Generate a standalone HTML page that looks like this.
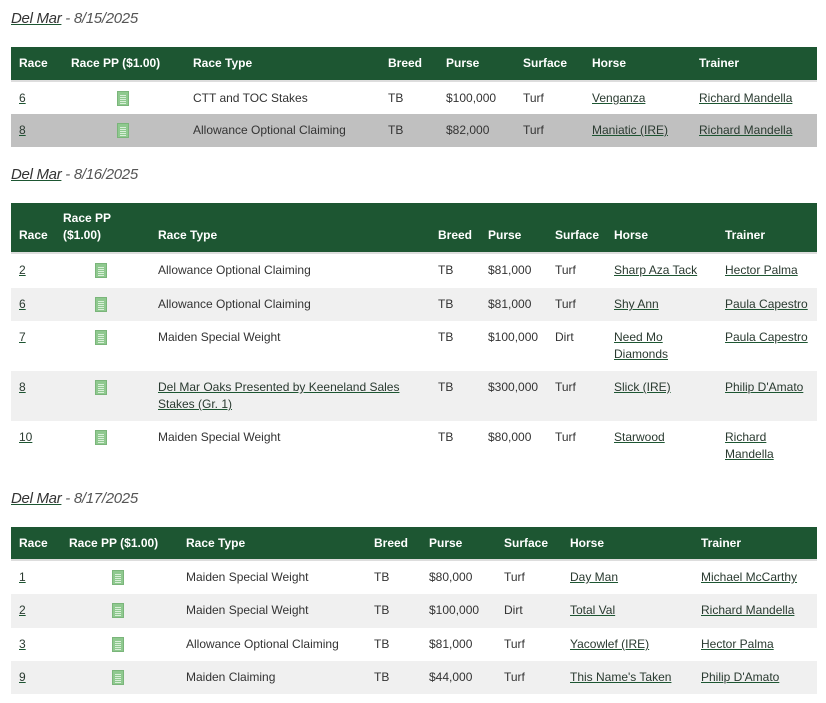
<!DOCTYPE html>
<html><head><meta charset="utf-8"><style>
body{margin:0;background:#fff;font-family:"Liberation Sans",Arial,sans-serif;font-size:12px;color:#333;width:826px;height:703px;overflow:hidden;position:relative}
h3{position:absolute;left:11px;margin:0;font-weight:normal;font-style:italic;font-size:15px;color:#555;letter-spacing:-0.3px}
h3 a{color:#333;text-decoration:underline;text-decoration-color:#1d5632}
table{position:absolute;left:11px;width:806px;border-collapse:collapse;table-layout:fixed}
th{background:#1d5632;color:#fff;font-weight:bold;text-align:left;padding:0 0 0 8px;border-bottom:2px solid #ddd;vertical-align:middle;line-height:17px}
td{padding:0 0 0 8px;vertical-align:top;line-height:17px;padding-top:8px}
td a{color:#2a3a30;text-decoration:underline;text-decoration-color:#1d5632}
tr.s td{background:#f0f0f0}
tr.h td{background:#c0c0c0}
.ic{display:inline-block;width:12px;height:15px;background:#8fc98f;border:1px solid #7ab57a;box-sizing:border-box;position:relative;margin-top:1px;vertical-align:top}
.ic::after{content:"";position:absolute;left:2px;right:2px;top:3px;height:9px;background:repeating-linear-gradient(#d9efd9 0 1px,transparent 1px 2px)}
</style></head><body>

<h3 style="top:10px"><a>Del Mar</a> - 8/15/2025</h3>
<table style="top:47px">
<colgroup><col style="width:52px"><col style="width:122px"><col style="width:195px"><col style="width:58px"><col style="width:77px"><col style="width:69px"><col style="width:107px"><col></colgroup>
<tr style="height:34px"><th>Race</th><th>Race PP ($1.00)</th><th>Race Type</th><th>Breed</th><th>Purse</th><th>Surface</th><th>Horse</th><th>Trainer</th></tr>
<tr style="height:33px"><td><a>6</a></td><td style="padding-left:54px"><span class="ic"></span></td><td>CTT and TOC Stakes</td><td>TB</td><td>$100,000</td><td>Turf</td><td><a>Venganza</a></td><td><a>Richard Mandella</a></td></tr>
<tr class="h" style="height:33px"><td><a>8</a></td><td style="padding-left:54px"><span class="ic"></span></td><td>Allowance Optional Claiming</td><td>TB</td><td>$82,000</td><td>Turf</td><td><a>Maniatic (IRE)</a></td><td><a>Richard Mandella</a></td></tr>
</table>

<h3 style="top:166px"><a>Del Mar</a> - 8/16/2025</h3>
<table style="top:203px">
<colgroup><col style="width:44px"><col style="width:95px"><col style="width:280px"><col style="width:50px"><col style="width:67px"><col style="width:59px"><col style="width:111px"><col></colgroup>
<tr style="height:50px"><th style="vertical-align:bottom;padding-bottom:8px">Race</th><th style="vertical-align:bottom;padding-bottom:8px">Race PP<br>($1.00)</th><th style="vertical-align:bottom;padding-bottom:8px">Race Type</th><th style="vertical-align:bottom;padding-bottom:8px">Breed</th><th style="vertical-align:bottom;padding-bottom:8px">Purse</th><th style="vertical-align:bottom;padding-bottom:8px">Surface</th><th style="vertical-align:bottom;padding-bottom:8px">Horse</th><th style="vertical-align:bottom;padding-bottom:8px">Trainer</th></tr>
<tr style="height:35px"><td><a>2</a></td><td style="padding-left:40px"><span class="ic"></span></td><td>Allowance Optional Claiming</td><td>TB</td><td>$81,000</td><td>Turf</td><td><a>Sharp Aza Tack</a></td><td><a>Hector Palma</a></td></tr>
<tr class="s" style="height:33px"><td><a>6</a></td><td style="padding-left:40px"><span class="ic"></span></td><td>Allowance Optional Claiming</td><td>TB</td><td>$81,000</td><td>Turf</td><td><a>Shy Ann</a></td><td><a>Paula Capestro</a></td></tr>
<tr style="height:50px"><td><a>7</a></td><td style="padding-left:40px"><span class="ic"></span></td><td>Maiden Special Weight</td><td>TB</td><td>$100,000</td><td>Dirt</td><td><a>Need Mo<br>Diamonds</a></td><td><a>Paula Capestro</a></td></tr>
<tr class="s" style="height:50px"><td><a>8</a></td><td style="padding-left:40px"><span class="ic"></span></td><td><a>Del Mar Oaks Presented by Keeneland Sales<br>Stakes (Gr. 1)</a></td><td>TB</td><td>$300,000</td><td>Turf</td><td><a>Slick (IRE)</a></td><td><a>Philip D'Amato</a></td></tr>
<tr style="height:50px"><td><a>10</a></td><td style="padding-left:40px"><span class="ic"></span></td><td>Maiden Special Weight</td><td>TB</td><td>$80,000</td><td>Turf</td><td><a>Starwood</a></td><td><a>Richard<br>Mandella</a></td></tr>
</table>

<h3 style="top:490px"><a>Del Mar</a> - 8/17/2025</h3>
<table style="top:527px">
<colgroup><col style="width:50px"><col style="width:117px"><col style="width:188px"><col style="width:55px"><col style="width:75px"><col style="width:66px"><col style="width:131px"><col></colgroup>
<tr style="height:33px"><th>Race</th><th>Race PP ($1.00)</th><th>Race Type</th><th>Breed</th><th>Purse</th><th>Surface</th><th>Horse</th><th>Trainer</th></tr>
<tr style="height:34px"><td><a>1</a></td><td style="padding-left:51px"><span class="ic"></span></td><td>Maiden Special Weight</td><td>TB</td><td>$80,000</td><td>Turf</td><td><a>Day Man</a></td><td><a>Michael McCarthy</a></td></tr>
<tr class="s" style="height:34px"><td><a>2</a></td><td style="padding-left:51px"><span class="ic"></span></td><td>Maiden Special Weight</td><td>TB</td><td>$100,000</td><td>Dirt</td><td><a>Total Val</a></td><td><a>Richard Mandella</a></td></tr>
<tr style="height:33px"><td><a>3</a></td><td style="padding-left:51px"><span class="ic"></span></td><td>Allowance Optional Claiming</td><td>TB</td><td>$81,000</td><td>Turf</td><td><a>Yacowlef (IRE)</a></td><td><a>Hector Palma</a></td></tr>
<tr class="s" style="height:33px"><td><a>9</a></td><td style="padding-left:51px"><span class="ic"></span></td><td>Maiden Claiming</td><td>TB</td><td>$44,000</td><td>Turf</td><td><a>This Name's Taken</a></td><td><a>Philip D'Amato</a></td></tr>
</table>
</body></html>
